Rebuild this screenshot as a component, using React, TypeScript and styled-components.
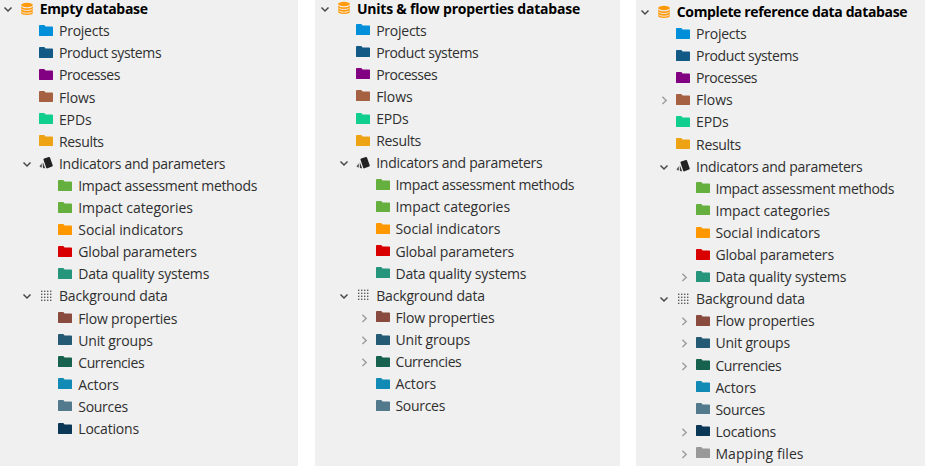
import React from "react";
import styled, { createGlobalStyle } from "styled-components";

const GlobalStyle = createGlobalStyle`
  body {
    margin: 0;
    background: #ffffff;
    font-family: "Open Sans", "Noto Sans", sans-serif;
  }
`;

type Level = 0 | 1 | 2;
type Branch = "open" | "closed";

interface TreeItem {
  label: string;
  level: Level;
  icon: "database" | "folder" | "style" | "grid";
  color?: string;
  branch?: Branch;
}

const folder = (label: string, level: Level, color: string): TreeItem => ({
  label,
  level,
  icon: "folder",
  color,
});

const modelFolders = [
  folder("Projects", 1, "#008fd8"),
  folder("Product systems", 1, "#125985"),
  folder("Processes", 1, "#820082"),
  folder("Flows", 1, "#a66142"),
  folder("EPDs", 1, "#10ce8d"),
  folder("Results", 1, "#eda313"),
];

const indicatorFolders = [
  folder("Impact assessment methods", 2, "#65af3f"),
  folder("Impact categories", 2, "#65af3f"),
  folder("Social indicators", 2, "#ff9800"),
  folder("Global parameters", 2, "#d80000"),
  folder("Data quality systems", 2, "#25967c"),
];

const backgroundFolders = [
  folder("Flow properties", 2, "#8a4b3f"),
  folder("Unit groups", 2, "#245a74"),
  folder("Currencies", 2, "#17624f"),
  folder("Actors", 2, "#118bb5"),
  folder("Sources", 2, "#537a8c"),
  folder("Locations", 2, "#0b3856"),
  folder("Mapping files", 2, "#999999"),
];

/* Letter spacing, in px, that gives each label its compact width. */
const tracking: Record<string, number> = {
  Projects: -0.25,
  "Product systems": -0.38,
  Processes: -0.45,
  Flows: -0.05,
  EPDs: -0.15,
  Results: -0.32,
  "Indicators and parameters": -0.27,
  "Impact assessment methods": -0.33,
  "Impact categories": -0.07,
  "Social indicators": -0.06,
  "Global parameters": -0.18,
  "Data quality systems": -0.2,
  "Background data": -0.16,
  "Flow properties": -0.17,
  "Unit groups": -0.18,
  Currencies: -0.42,
  Actors: -0.12,
  Sources: -0.3,
  Locations: -0.2,
  "Mapping files": 0.08,
  "Empty database": -0.33,
  "Units & flow properties database": -0.21,
  "Complete reference data database": -0.36,
};

function buildTree(title: string, hidden: string[], closed: string[]): TreeItem[] {
  const items: TreeItem[] = [
    { label: title, level: 0, icon: "database", branch: "open" },
    ...modelFolders,
    { label: "Indicators and parameters", level: 1, icon: "style", branch: "open" },
    ...indicatorFolders,
    { label: "Background data", level: 1, icon: "grid", branch: "open" },
    ...backgroundFolders,
  ];
  return items
    .filter((item) => !hidden.includes(item.label))
    .map((item) => (closed.includes(item.label) ? { ...item, branch: "closed" } : item));
}

const emptyTree = buildTree("Empty database", ["Mapping files"], []);
const unitsTree = buildTree(
  "Units & flow properties database",
  ["Locations", "Mapping files"],
  ["Flow properties", "Unit groups", "Currencies"],
);
const completeTree = buildTree(
  "Complete reference data database",
  [],
  [
    "Flows",
    "Data quality systems",
    "Flow properties",
    "Unit groups",
    "Currencies",
    "Locations",
    "Mapping files",
  ],
);

const Page = styled.main`
  display: grid;
  grid-template-columns: 299px 305px 289px;
  column-gap: 16px;
  width: 925px;
  height: 466px;
  overflow: hidden;
`;

const Panel = styled.ul<{ $top: number; $left: number }>`
  box-sizing: border-box;
  margin: 0;
  padding: ${(p) => p.$top}px 0 0 ${(p) => p.$left}px;
  list-style: none;
  background: #f0f0f0;

  &:first-child {
    margin-right: 1px;
  }
`;

/* The root row is shorter, so the tree starts close to the panel's top edge. */
const Row = styled.li<{ $level: Level }>`
  display: flex;
  align-items: center;
  height: ${(p) => (p.$level === 0 ? 16 : 22.1)}px;
  margin-bottom: ${(p) => (p.$level === 0 ? 3.05 : 0)}px;
  padding-left: ${(p) => p.$level * 19.3}px;
`;

const Toggle = styled.span`
  display: flex;
  flex: none;
  width: 16px;
`;

const IconSlot = styled.span`
  display: flex;
  flex: none;
  justify-content: center;
  width: 16px;
  margin: 0 4.8px 0.8px 0;
`;

const Label = styled.span<{ $bold: boolean; $tracking: number }>`
  font-size: 14px;
  line-height: 16px;
  font-weight: ${(p) => (p.$bold ? 700 : 400)};
  letter-spacing: ${(p) => p.$tracking}px;
  color: ${(p) => (p.$bold ? "#000000" : "#2f2f2f")};
  white-space: nowrap;
`;

function Chevron({ branch }: { branch: Branch }) {
  return branch === "open" ? (
    <svg width="10" height="10" viewBox="0 0 10 10" fill="none" stroke="#484848" strokeWidth="1.5">
      <path d="M1.5 3.5 5 7 8.5 3.5" />
    </svg>
  ) : (
    <svg width="10" height="10" viewBox="0 0 10 10" fill="none" stroke="#9c9c9c" strokeWidth="1.4">
      <path d="M3.4 1.7 7.2 5.4 3.4 9.1" />
    </svg>
  );
}

function DatabaseIcon() {
  return (
    <svg width="14" height="14" viewBox="0 0.5 14 15" preserveAspectRatio="none" fill="#ff9b0a">
      <ellipse cx="7" cy="3.7" rx="5.9" ry="2.4" />
      <path d="M1.1 5.2c1 1.5 3.4 1.9 5.9 1.9s4.9-.4 5.9-1.9v1.7c0 1.3-2.6 2.1-5.9 2.1s-5.9-.8-5.9-2.1z" />
      <path d="M1.1 8.1c1 1.5 3.4 1.9 5.9 1.9s4.9-.4 5.9-1.9v1.7c0 1.3-2.6 2.1-5.9 2.1s-5.9-.8-5.9-2.1z" />
      <path d="M1.1 11c1 1.5 3.4 1.9 5.9 1.9s4.9-.4 5.9-1.9v1.3c0 1.3-2.6 2.1-5.9 2.1s-5.9-.8-5.9-2.1z" />
    </svg>
  );
}

function FolderIcon({ color }: { color?: string }) {
  return (
    <svg width="14" height="14" viewBox="0 0 14 14" fill={color}>
      <path d="M.9 1.1h4.4l1.3 1.3h6.5q.9 0 .9.9v7.9q0 .9-.9.9H.9q-.9 0-.9-.9V2q0-.9.9-.9z" />
    </svg>
  );
}

function StyleIcon() {
  return (
    <svg width="14" height="14" viewBox="0 0 14 14" fill="#222222">
      <path d="M5.2 2.4 9.8 1q.9-.2 1.2.6l2.7 7.6q.3.9-.6 1.3l-4.6 1.8q-.9.3-1.3-.6L4.5 3.7q-.3-1 .7-1.3z" />
      <path d="M3.8 5.9 6.2 12.3H5.1q-1.3-.1-1.3-1.4z" fill="#3a3a3a" />
      <path d="M2.8 7.2v4.6l-1.6-.7Q.4 10.7.7 9.9z" fill="#555555" />
    </svg>
  );
}

function GridIcon() {
  const steps = [0, 1, 2, 3];
  return (
    <svg width="14" height="14" viewBox="0 0 14 14" fill="#5c5c5c">
      {steps.map((y) =>
        steps.map((x) => (
          <rect key={`${x}-${y}`} x={2 + x * 3} y={1.6 + y * 3} width="1.4" height="1.4" />
        )),
      )}
    </svg>
  );
}

function ItemIcon({ item }: { item: TreeItem }) {
  switch (item.icon) {
    case "database":
      return <DatabaseIcon />;
    case "style":
      return <StyleIcon />;
    case "grid":
      return <GridIcon />;
    default:
      return <FolderIcon color={item.color} />;
  }
}

function Tree({ items, top, left }: { items: TreeItem[]; top: number; left: number }) {
  return (
    <Panel $top={top} $left={left}>
      {items.map((item) => (
        <Row key={item.label} $level={item.level}>
          <Toggle>{item.branch && <Chevron branch={item.branch} />}</Toggle>
          <IconSlot>
            <ItemIcon item={item} />
          </IconSlot>
          <Label $bold={item.level === 0} $tracking={tracking[item.label]}>
            {item.label}
          </Label>
        </Row>
      ))}
    </Panel>
  );
}

export default function App() {
  return (
    <>
      <GlobalStyle />
      <Page>
        <Tree items={emptyTree} top={1.2} left={2.9} />
        <Tree items={unitsTree} top={0.5} left={5.1} />
        <Tree items={completeTree} top={4} left={4} />
      </Page>
    </>
  );
}
